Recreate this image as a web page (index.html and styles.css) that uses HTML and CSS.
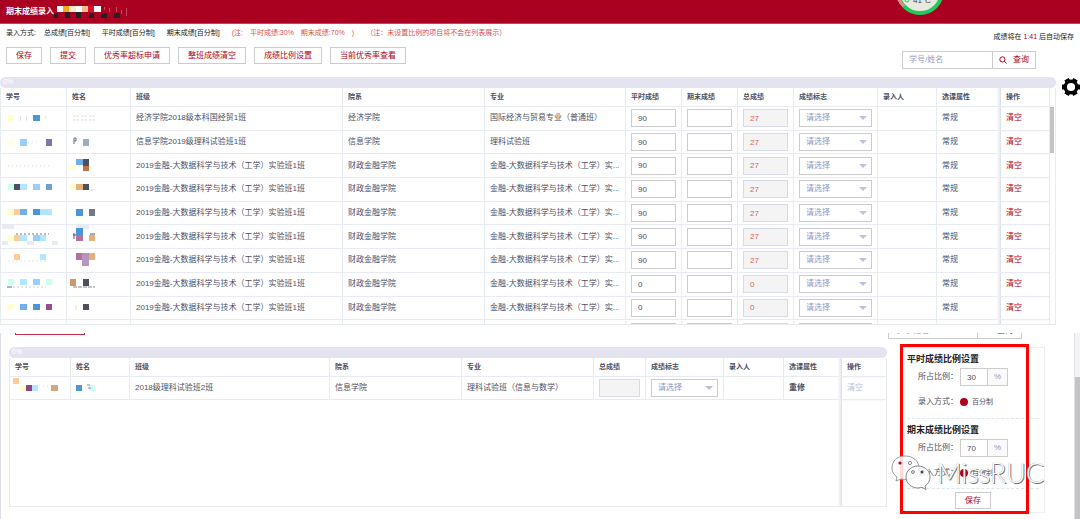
FILE: index.html
```
<!DOCTYPE html>
<html lang="zh-CN">
<head>
<meta charset="utf-8">
<title>期末成绩录入</title>
<link rel="stylesheet" href="styles.css">
</head>
<body>
<header class="topbar">
  <h1>期末成绩录入</h1>
  <svg class="topbar-mask" viewBox="0 0 76 14" aria-hidden="true">
    <path fill="#fff" d="M2 1h6v6H2zM21 1h6v6h-6zM39 1h7v6h-7z"/>
    <path fill="#f5a623" d="M8 1h6v6H8z"/><path fill="#fdebc8" d="M14 1h7v6h-7z"/>
    <path fill="#f0bd92" d="M27 1h6v6h-6z"/><path fill="#d9102c" d="M33 1h6v6h-6z"/>
    <path fill="#222" d="M-1 8h4v5h-4zM10 7h5v6h-5zM21 7h5v6h-5zM34 8h5v5h-5zM46 8h6v5h-6zM59 8h6v5h-6z"/>
    <path fill="#c9475e" d="M49 2h1v3h-1zM54 3h1v4h-1zM61 2h1v5h-1zM66 5h1v4h-1zM71 3h1v8h-1z"/>
  </svg>
  <svg class="temp" viewBox="0 0 50 16" aria-label="41°C">
    <circle cx="25" cy="-9" r="22" fill="#e9e8df" stroke="#1fcb5c" stroke-width="4"/>
    <path d="M3 -2A22 22 0 0 0 9 6" fill="none" stroke="#e08a8a" stroke-width="3"/>
    <circle cx="12" cy="0" r="2" fill="none" stroke="#1fcb5c" stroke-width="1"/>
    <text x="18" y="3" font-size="8" fill="#444">41°C</text>
  </svg>
</header>

<section class="entry">
  <div class="controls">
    <div class="controls-left">
      <p class="modes">
        <span>录入方式:</span><span class="m1">总成绩[百分制]</span><span class="m2">平时成绩[百分制]</span><span class="m2">期末成绩[百分制]</span>
        <span class="note">(注:&emsp;平时成绩:30%&emsp;期末成绩:70%&emsp;)</span><span class="note">（注：未设置比例的项目将不会在列表展示）</span>
      </p>
      <div class="buttons">
        <button class="btn">保存</button><button class="btn">提交</button><button class="btn">优秀率超标申请</button><button class="btn">整班成绩清空</button><button class="btn">成绩比例设置</button><button class="btn">当前优秀率查看</button>
      </div>
    </div>
    <div class="controls-right">
      <p class="autosave">成绩将在 <b>1:41</b> 后自动保存</p>
      <div class="search">
        <input type="text" placeholder="学号/姓名" aria-label="学号/姓名">
        <button><svg viewBox="0 0 8 8"><circle cx="3.4" cy="3.4" r="2.6"/><path d="M5.3 5.3L7.5 7.5"/></svg>查询</button>
      </div>
    </div>
  </div>

  <div class="main-row">
    <div class="grid-wrap">
      <div class="progress">0%</div>
      <div class="scroller">
        <table class="grades main">
          <colgroup><col class="w-id"><col class="w-name"><col><col class="w-dept"><col class="w-major"><col class="w-score"><col class="w-score"><col class="w-score"><col class="w-flag"><col class="w-by"><col class="w-attr"><col class="w-op"></colgroup>
          <thead><tr><th>学号</th><th>姓名</th><th>班级</th><th>院系</th><th>专业</th><th>平时成绩</th><th>期末成绩</th><th>总成绩</th><th>成绩标志</th><th>录入人</th><th>选课属性</th><th class="op">操作</th></tr></thead>
          <tbody>
            <tr>
              <td><svg class="mask" viewBox="0 0 50 18"><path fill="#ffffcc" d="M2 6h6v6H2z"/><path fill="#4a96d9" d="M27 6h7v6h-7z"/><path fill="#e6e6e6" d="M14 7h1v5h-1zM20 7h1v5h-1zM39 7h1v3h-1z"/></svg></td>
              <td><svg class="mask" viewBox="0 0 50 18"><path stroke="#ddd" stroke-dasharray="3 1 2 2" d="M1 7h22M1 11h22"/></svg></td>
              <td>经济学院2018级本科国经贸1班</td><td>经济学院</td><td>国际经济与贸易专业（普通班）</td>
              <td><input aria-label="平时成绩" value="90"></td><td><input aria-label="期末成绩"></td><td><input aria-label="总成绩" value="27" disabled></td>
              <td><span class="pick"><select aria-label="成绩标志"><option>请选择</option></select></span></td><td></td><td>常规</td><td class="op"><a href="#">清空</a></td>
            </tr>
            <tr>
              <td><svg class="mask" viewBox="0 0 50 18"><path fill="#ffffe0" d="M2 6h6v6H2z"/><path fill="#99ccff" d="M14 6h7v7h-7z"/><path fill="#7b75b3" d="M40 6h6v7h-6z"/><path stroke="#e2e2e2" stroke-dasharray="1 3" d="M22 9h16"/></svg></td>
              <td><svg class="mask" viewBox="0 0 50 18"><path fill="none" stroke="#667" d="M2 5v6M2 5h2v3h-2"/><path fill="#99b0c4" d="M11 6h6v7h-6z"/></svg></td>
              <td>信息学院2019级理科试验班1班</td><td>信息学院</td><td>理科试验班</td>
              <td><input aria-label="平时成绩" value="90"></td><td><input aria-label="期末成绩"></td><td><input aria-label="总成绩" value="27" disabled></td>
              <td><span class="pick"><select aria-label="成绩标志"><option>请选择</option></select></span></td><td></td><td>常规</td><td class="op"><a href="#">清空</a></td>
            </tr>
            <tr>
              <td><svg class="mask" viewBox="0 0 50 18"><path stroke="#ddd" stroke-dasharray="1 3" d="M2 9h42"/></svg></td>
              <td><svg class="mask" viewBox="0 0 50 18"><path fill="#6fb0ea" d="M4 2h7v6H4z"/><path fill="#4d5060" d="M11 2h6v7h-6z"/><path fill="#bc7744" d="M11 9h6v5h-6z"/><path fill="#ffffcc" d="M-2 8h6v5h-6z"/></svg></td>
              <td>2019金融-大数据科学与技术（工学）实验班1班</td><td>财政金融学院</td><td>金融-大数据科学与技术（工学）实...</td>
              <td><input aria-label="平时成绩" value="90"></td><td><input aria-label="期末成绩"></td><td><input aria-label="总成绩" value="27" disabled></td>
              <td><span class="pick"><select aria-label="成绩标志"><option>请选择</option></select></span></td><td></td><td>常规</td><td class="op"><a href="#">清空</a></td>
            </tr>
            <tr>
              <td><svg class="mask" viewBox="0 0 50 18"><path fill="#ccffee" d="M2 4h6v6H2z"/><path fill="#4d5060" d="M8 4h6v6H8z"/><path fill="#b3e6ff" d="M14 4h7v6h-7z"/><path fill="#99ccff" d="M27 4h7v6h-7z"/><path fill="#6f9fd4" d="M40 4h6v6h-6z"/></svg></td>
              <td><svg class="mask" viewBox="0 0 50 18"><path fill="#ffffcc" d="M-2 4h6v6h-6z"/><path fill="#e8b078" d="M4 4h7v6H4z"/><path fill="#4d5060" d="M11 4h6v6h-6z"/><path stroke="#ddd" d="M18 10h5"/></svg></td>
              <td>2019金融-大数据科学与技术（工学）实验班1班</td><td>财政金融学院</td><td>金融-大数据科学与技术（工学）实...</td>
              <td><input aria-label="平时成绩" value="90"></td><td><input aria-label="期末成绩"></td><td><input aria-label="总成绩" value="27" disabled></td>
              <td><span class="pick"><select aria-label="成绩标志"><option>请选择</option></select></span></td><td></td><td>常规</td><td class="op"><a href="#">清空</a></td>
            </tr>
            <tr>
              <td><svg class="mask" viewBox="0 0 50 18"><path fill="#ffffcc" d="M2 5h6v6H2z"/><path fill="#ffcc99" d="M8 5h6v6H8z"/><path fill="#6fb0ea" d="M14 5h7v6h-7z"/><path fill="#4a96d9" d="M27 5h7v6h-7z"/><path fill="#b3e6ff" d="M34 5h12v6H34z"/></svg></td>
              <td><svg class="mask" viewBox="0 0 50 18"><path fill="#4a96d9" d="M4 5h7v7H4z"/><path fill="#747888" d="M17 5h6v7h-6z"/></svg></td>
              <td>2019金融-大数据科学与技术（工学）实验班1班</td><td>财政金融学院</td><td>金融-大数据科学与技术（工学）实...</td>
              <td><input aria-label="平时成绩" value="90"></td><td><input aria-label="期末成绩"></td><td><input aria-label="总成绩" value="27" disabled></td>
              <td><span class="pick"><select aria-label="成绩标志"><option>请选择</option></select></span></td><td></td><td>常规</td><td class="op"><a href="#">清空</a></td>
            </tr>
            <tr>
              <td><svg class="mask" viewBox="0 0 50 18"><path fill="#e8ebf2" d="M-4 -3h12v4H-4zM-4 13h6v4h-6zM21 13h7v4h-7zM46 13h6v4h-6z"/><path fill="#ffffcc" d="M2 7h6v6H2z"/><path stroke="#778" stroke-dasharray="2 2" d="M10 6h33"/><path fill="#ffcc99" d="M8 7h6v6H8z"/><path fill="#b3e6ff" d="M14 7h7v6h-7zM34 7h6v6h-6z"/><path fill="#99ccff" d="M27 7h7v6h-7z"/></svg></td>
              <td><svg class="mask" viewBox="0 0 50 18"><path fill="#e8ebf2" d="M4 -3h13v4H4z"/><path stroke="#556" d="M1 7h3M2 5v6M18 6h5"/><path fill="#4a96d9" d="M4 0h7v7H4z"/><path fill="#b5729f" d="M4 7h7v6H4z"/><path fill="#e8b078" d="M17 7h6v6h-6z"/></svg></td>
              <td>2019金融-大数据科学与技术（工学）实验班1班</td><td>财政金融学院</td><td>金融-大数据科学与技术（工学）实...</td>
              <td><input aria-label="平时成绩" value="90"></td><td><input aria-label="期末成绩"></td><td><input aria-label="总成绩" value="27" disabled></td>
              <td><span class="pick"><select aria-label="成绩标志"><option>请选择</option></select></span></td><td></td><td>常规</td><td class="op"><a href="#">清空</a></td>
            </tr>
            <tr>
              <td><svg class="mask" viewBox="0 0 50 18"><path fill="#ffcc99" d="M8 3h6v6H8z"/><path fill="#b3e6ff" d="M34 3h6v6h-6z"/><path stroke="#e4e4e4" stroke-dasharray="2 2" d="M2 10h38"/></svg></td>
              <td><svg class="mask" viewBox="0 0 50 18"><path fill="#b5729f" d="M4 2h7v7H4z"/><path fill="#b497bf" d="M10 2h7v13h-7z"/><path fill="#e8b078" d="M17 2h6v7h-6z"/></svg></td>
              <td>2019金融-大数据科学与技术（工学）实验班1班</td><td>财政金融学院</td><td>金融-大数据科学与技术（工学）实...</td>
              <td><input aria-label="平时成绩" value="90"></td><td><input aria-label="期末成绩"></td><td><input aria-label="总成绩" value="27" disabled></td>
              <td><span class="pick"><select aria-label="成绩标志"><option>请选择</option></select></span></td><td></td><td>常规</td><td class="op"><a href="#">清空</a></td>
            </tr>
            <tr>
              <td><svg class="mask" viewBox="0 0 50 18"><path fill="#ccffee" d="M2 4h6v6H2zM40 4h6v6h-6z"/><path fill="#b3e6ff" d="M14 4h7v6h-7z"/><path fill="#99ccff" d="M27 4h7v6h-7z"/><path stroke="#667" d="M1 12h5"/><path stroke="#ccc" stroke-dasharray="2 2" d="M7 12h33"/></svg></td>
              <td><svg class="mask" viewBox="0 0 50 18"><path stroke="#889" stroke-dasharray="4 1" d="M1 12h22"/><path fill="#cc9966" d="M-2 4h6v7h-6z"/><path fill="#4d5060" d="M11 4h6v7h-6z"/></svg></td>
              <td>2019金融-大数据科学与技术（工学）实验班1班</td><td>财政金融学院</td><td>金融-大数据科学与技术（工学）实...</td>
              <td><input aria-label="平时成绩" value="0"></td><td><input aria-label="期末成绩"></td><td><input aria-label="总成绩" value="0" disabled></td>
              <td><span class="pick"><select aria-label="成绩标志"><option>请选择</option></select></span></td><td></td><td>常规</td><td class="op"><a href="#">清空</a></td>
            </tr>
            <tr>
              <td><svg class="mask" viewBox="0 0 50 18"><path fill="#ffffcc" d="M2 5h6v6H2z"/><path fill="#6fb0ea" d="M14 5h7v6h-7z"/><path fill="#4a96d9" d="M27 5h7v6h-7z"/><path fill="#994d8c" d="M40 5h6v6h-6z"/></svg></td>
              <td><svg class="mask" viewBox="0 0 50 18"><path fill="#4d5060" d="M11 5h6v6h-6z"/><path stroke="#ddd" d="M4 6v5"/></svg></td>
              <td>2019金融-大数据科学与技术（工学）实验班1班</td><td>财政金融学院</td><td>金融-大数据科学与技术（工学）实...</td>
              <td><input aria-label="平时成绩" value="0"></td><td><input aria-label="期末成绩"></td><td><input aria-label="总成绩" value="0" disabled></td>
              <td><span class="pick"><select aria-label="成绩标志"><option>请选择</option></select></span></td><td></td><td>常规</td><td class="op"><a href="#">清空</a></td>
            </tr>
            <tr>
              <td></td><td></td><td></td><td></td><td></td>
              <td><input aria-label="平时成绩"></td><td><input aria-label="期末成绩"></td><td><input aria-label="总成绩" disabled></td>
              <td><span class="pick"><select aria-label="成绩标志"><option></option></select></span></td><td></td><td></td><td class="op"></td>
            </tr>
          </tbody>
        </table>
        <div class="vscroll"><div class="vthumb"></div></div>
      </div>
    </div>
    <aside class="tools">
      <svg class="gear" viewBox="0 0 20 20" aria-label="设置"><path stroke="#000" stroke-width="5" d="M1 10h18M5.500 2.200l9 15.600M14.500 2.200l-9 15.600"/><circle cx="10" cy="10" r="5.800" fill="#fff" stroke="#000" stroke-width="3.400"/></svg>
    </aside>
  </div>
</section>

<section class="retake">
  <div class="retake-main">
    <div class="cut-button"></div>
    <div class="progress">0%</div>
    <div class="retake-box">
      <table class="grades second">
        <colgroup><col class="v-id"><col class="v-name"><col><col class="v-dept"><col class="v-dept"><col class="v-score"><col class="v-flag"><col class="v-by"><col class="v-attr"><col class="v-op"></colgroup>
        <thead><tr><th>学号</th><th>姓名</th><th>班级</th><th>院系</th><th>专业</th><th>总成绩</th><th>成绩标志</th><th>录入人</th><th>选课属性</th><th class="op">操作</th></tr></thead>
        <tbody>
          <tr>
            <td><svg class="mask" viewBox="0 0 50 18"><path fill="#ffcc99" d="M-2 -1h6v6h-6z"/><path fill="#ffffcc" d="M4 6h7v6H4z"/><path fill="#8e4585" d="M11 6h6v6h-6z"/><path fill="#b3e6ff" d="M17 6h6v6h-6z"/><path fill="#d3a884" d="M36 6h7v6h-7z"/><path stroke="#ddd" stroke-dasharray="1 3" d="M24 7h12"/></svg></td>
            <td><svg class="mask" viewBox="0 0 50 18"><path fill="#4a96d9" d="M0 6h6v6H0z"/><path fill="#ccffee" d="M13 6h6v6h-6z"/><path stroke="#889" d="M11 6h3M12 9h3"/></svg></td>
            <td>2018级理科试验班2班</td><td>信息学院</td><td>理科试验班（信息与数学）</td>
            <td><input aria-label="总成绩" disabled></td>
            <td><span class="pick"><select aria-label="成绩标志"><option>请选择</option></select></span></td><td></td><td class="strong">重修</td><td class="op"><a class="off" href="#">清空</a></td>
          </tr>
          <tr class="filler"><td colspan="9"></td><td class="op"></td></tr>
        </tbody>
      </table>
    </div>
  </div>
  <aside class="side">
    <div class="cut-search"><span>学号/姓名</span><span class="go">查询</span></div>
    <form class="ratio">
      <fieldset>
        <legend>平时成绩比例设置</legend>
        <div class="line"><label for="r1">所占比例：</label><input id="r1" value="30"><span class="unit">%</span></div>
        <div class="line"><span class="lab">录入方式：</span><label class="choice"><input type="radio" name="a" checked>百分制</label></div>
      </fieldset>
      <fieldset>
        <legend>期末成绩比例设置</legend>
        <div class="line"><label for="r2">所占比例：</label><input id="r2" value="70"><span class="unit">%</span></div>
        <div class="line"><span class="lab">录入方式：</span><label class="choice"><input type="radio" name="b" checked>百分制</label></div>
      </fieldset>
      <div class="save"><button class="btn" type="button">保存</button></div>
      <div class="callout"></div>
      <div class="brand">
        <svg viewBox="0 0 46 36" aria-hidden="true">
          <path fill="#fff" fill-opacity=".85" stroke="#999" d="M14 1C6 1 1 6 1 13c0 4 2 7 5 9l-1 4 5-2c9 2 18-2 18-11C28 6 22 1 14 1z"/>
          <path fill="#fff" fill-opacity=".85" stroke="#888" d="M27 11c-7 0-12 5-12 11s5 11 12 11l4-.6 4 2.100-1-3.500c3-2 5-5 5-9 0-6-5-11-12-11z"/>
          <circle cx="9" cy="8" r="1.600" fill="#c00018"/><circle cx="19" cy="8" r="1.600" fill="none" stroke="#888"/>
          <circle cx="22" cy="17" r="1.400" fill="none" stroke="#777"/><circle cx="31" cy="17" r="1.500" fill="#445"/>
        </svg>
        <span>MissRUC</span>
      </div>
    </form>
  </aside>
  <div class="page-scroll"><div class="page-thumb"></div></div>
</section>
</body>
</html>
```

FILE: styles.css
```
* { box-sizing: border-box; }
html, body { height: 100%; }
body {
  margin: 0;
  display: flex;
  flex-direction: column;
  overflow: hidden;
  background: #fff;
  color: #4d5064;
  font: 8px/12px "Liberation Sans", "Noto Sans CJK SC", sans-serif;
}
p, h1, fieldset, legend { margin: 0; padding: 0; border: 0; }
input, button, select { font: inherit; color: inherit; margin: 0; border-radius: 0; }
a { color: #b00020; text-decoration: none; }

.topbar {
  position: relative;
  flex: none;
  display: flex;
  align-items: center;
  gap: 1px;
  height: 24px;
  padding: 1px 6px 0;
  background: #ab0120;
  border-bottom: 1px solid #d2425a;
  color: #fff;
}
.topbar h1 { font-size: 8px; line-height: 12px; }
.topbar-mask { width: 76px; height: 14px; overflow: visible; }
.temp { position: absolute; top: 0; right: 135px; width: 50px; height: 16px; }

.entry { flex: none; }
.controls { display: flex; justify-content: space-between; padding: 3px 6px 8px; }
.modes { display: flex; font-size: 7px; line-height: 12px; color: #222; white-space: nowrap; }
.m1 { margin-left: 8px; }
.m2 { margin-left: 12px; }
.note { margin-left: 12px; color: #d9534f; }
.buttons { display: flex; gap: 8px; margin-top: 8px; }
.btn {
  height: 17px;
  padding: 0 9px;
  border: 1px solid #ccc;
  background: #fff;
  color: #b00020;
  line-height: 12px;
  white-space: nowrap;
}
.controls-right { width: 172px; }
.autosave { margin-top: 4px; font-size: 7px; line-height: 12px; color: #222; text-align: right; }
.autosave b { font-weight: 400; color: #b00020; }
.search { display: flex; width: 134px; height: 18px; margin-top: 8px; border: 1px solid #ccc; }
.search input { flex: 1; min-width: 0; border: 0; border-right: 1px solid #ccc; padding: 0 6px; outline: 0; }
.search input::placeholder { color: #949bc4; opacity: 1; }
.search button {
  display: flex; align-items: center; justify-content: center; gap: 6px;
  width: 42px; padding: 0; border: 0; background: #fff; color: #b00020;
}
.search svg { width: 8px; height: 8px; fill: none; stroke: #b00020; stroke-width: 1; }

.main-row { display: flex; }
.grid-wrap { flex: 1; min-width: 0; }
.tools { flex: none; width: 24px; padding-left: 5px; }
.gear { display: block; width: 20px; height: 20px; }
.progress {
  height: 11px;
  padding-left: 3px;
  border-radius: 6px;
  background: #e4e4f1;
  color: #fff;
  font-size: 7px;
  line-height: 10px;
}
.scroller {
  display: flex;
  height: 237px;
  overflow: hidden;
  border: 1px solid #e6ebf0;
  border-top: 0;
}
.grades { flex: 1; width: 100%; table-layout: fixed; border-collapse: separate; border-spacing: 0; }
.grades.main { height: 256px; }
.grades th, .grades td {
  padding: 0 5px;
  border-right: 1px solid #e8ecf2;
  border-bottom: 1px solid #e8ecf2;
  text-align: left;
  vertical-align: middle;
  white-space: nowrap;
}
.grades th { height: 19px; font-size: 7px; line-height: 10px; font-weight: 600; }
.grades td { height: 23px; }
.grades .op { border-left: 1px solid #dde1ea; border-right: 0; box-shadow: -2px 0 2px #ebedf2; }
.grades input, .grades select {
  display: block;
  width: 100%;
  height: 18px;
  padding: 0 6px;
  border: 1px solid #ccc;
  background: #fff;
  outline: 0;
}
.grades input:disabled { background: #f4f4f4; border-color: #d8dae8; color: #e06060; }
.pick { display: block; position: relative; }
.pick select { appearance: none; color: #8f97c5; }
.pick::after {
  content: "";
  position: absolute;
  top: 7px;
  right: 5px;
  border: 4px solid transparent;
  border-top-color: #bcc0dc;
  border-bottom: 0;
}
.mask { display: block; width: 50px; height: 18px; overflow: visible; }
.grades .off { color: #b9bfdb; }
.strong { font-weight: 600; }
.w-id { width: 66px; } .w-name { width: 64px; } .w-dept { width: 142px; } .w-major { width: 141px; }
.w-score { width: 56px; } .w-flag { width: 84px; } .w-by { width: 59px; } .w-attr { width: 63px; } .w-op { width: 49px; }
.vscroll { flex: none; width: 6px; padding: 19px 1px 0 0; border-left: 1px solid #e8ecf2; }
.vthumb { height: 46px; background: #c4c4c4; }

.retake {
  flex: 1;
  min-height: 0;
  display: flex;
  margin-top: 8px;
  border-left: 1px solid #dcdcec;
}
.retake-main { flex: 1; min-width: 0; display: flex; flex-direction: column; padding: 0 0 12px 8px; }
.cut-button { flex: none; width: 70px; height: 2px; margin: 0 0 12px 6px; border: 1px solid #c0304a; border-top: 0; }
.retake-main .progress { flex: none; }
.retake-box { flex: 1; min-height: 0; border: 1px solid #e6ebf0; border-top: 0; }
.grades.second { height: 100%; }
.grades .filler td { height: auto; border-bottom: 0; border-right: 0; }
.v-id { width: 61px; } .v-name { width: 59px; } .v-dept { width: 132px; }
.v-score { width: 52px; } .v-flag { width: 78px; } .v-by { width: 60px; } .v-attr { width: 57px; } .v-op { width: 45px; }

.side { flex: none; width: 187px; }
.cut-search {
  display: flex;
  align-items: flex-end;
  width: 134px;
  height: 6px;
  margin: 0 0 8px 1px;
  border: 1px solid #ccc;
  border-top: 0;
  overflow: hidden;
  color: #949bc4;
}
.cut-search span { flex: 1; padding: 0 6px 2px; line-height: 10px; }
.cut-search .go { flex: none; width: 44px; padding: 0 8px 2px; border-left: 1px solid #ccc; color: #b00020; text-align: right; }
.ratio {
  position: relative;
  width: 144px;
  margin-left: 14px;
  padding: 5px 5px 3px;
  border: 1px solid #eceef4;
}
.ratio fieldset { min-width: 0; height: 70px; border-bottom: 1px dashed #dfe3ea; }
.ratio fieldset + fieldset { padding-top: 5px; }
.ratio fieldset:first-of-type { height: 66px; }
.ratio legend { float: left; width: 100%; color: #222; font-size: 9px; line-height: 12px; font-weight: 700; }
.line { clear: both; display: flex; align-items: center; height: 25px; padding: 0 0 1px 11px; }
.line > label:first-child, .lab { width: 42px; }
.line > input { width: 28px; height: 18px; padding: 0 6px; border: 1px solid #ccc; }
.unit { width: 20px; height: 18px; border: 1px solid #ccc; border-left: 0; background: #fafafa; color: #8f97c5; line-height: 16px; text-align: center; }
.choice { display: flex; align-items: center; gap: 4px; font-size: 7px; }
.choice input { appearance: none; width: 8px; height: 8px; border-radius: 50%; background: #b00020; }
.save { display: flex; justify-content: center; padding-top: 3px; }
.callout { position: absolute; inset: -4px 15px -2px -2px; border: 3px solid #f00; }
.brand { position: absolute; left: -11px; bottom: 21px; display: flex; align-items: center; }
.brand svg { width: 46px; height: 36px; overflow: visible; }
.brand span {
  color: #fff;
  font: 300 27px/30px Lato, "Open Sans", sans-serif;
  text-shadow: 1px 1px 0 #777, 0 0 1px #999;
}
.page-scroll { flex: none; width: 6px; padding-top: 44px; border-left: 1px solid #e0e2ea; background: #f4f4f6; }
.page-thumb { height: 100%; background: #c4c4c4; }
```
